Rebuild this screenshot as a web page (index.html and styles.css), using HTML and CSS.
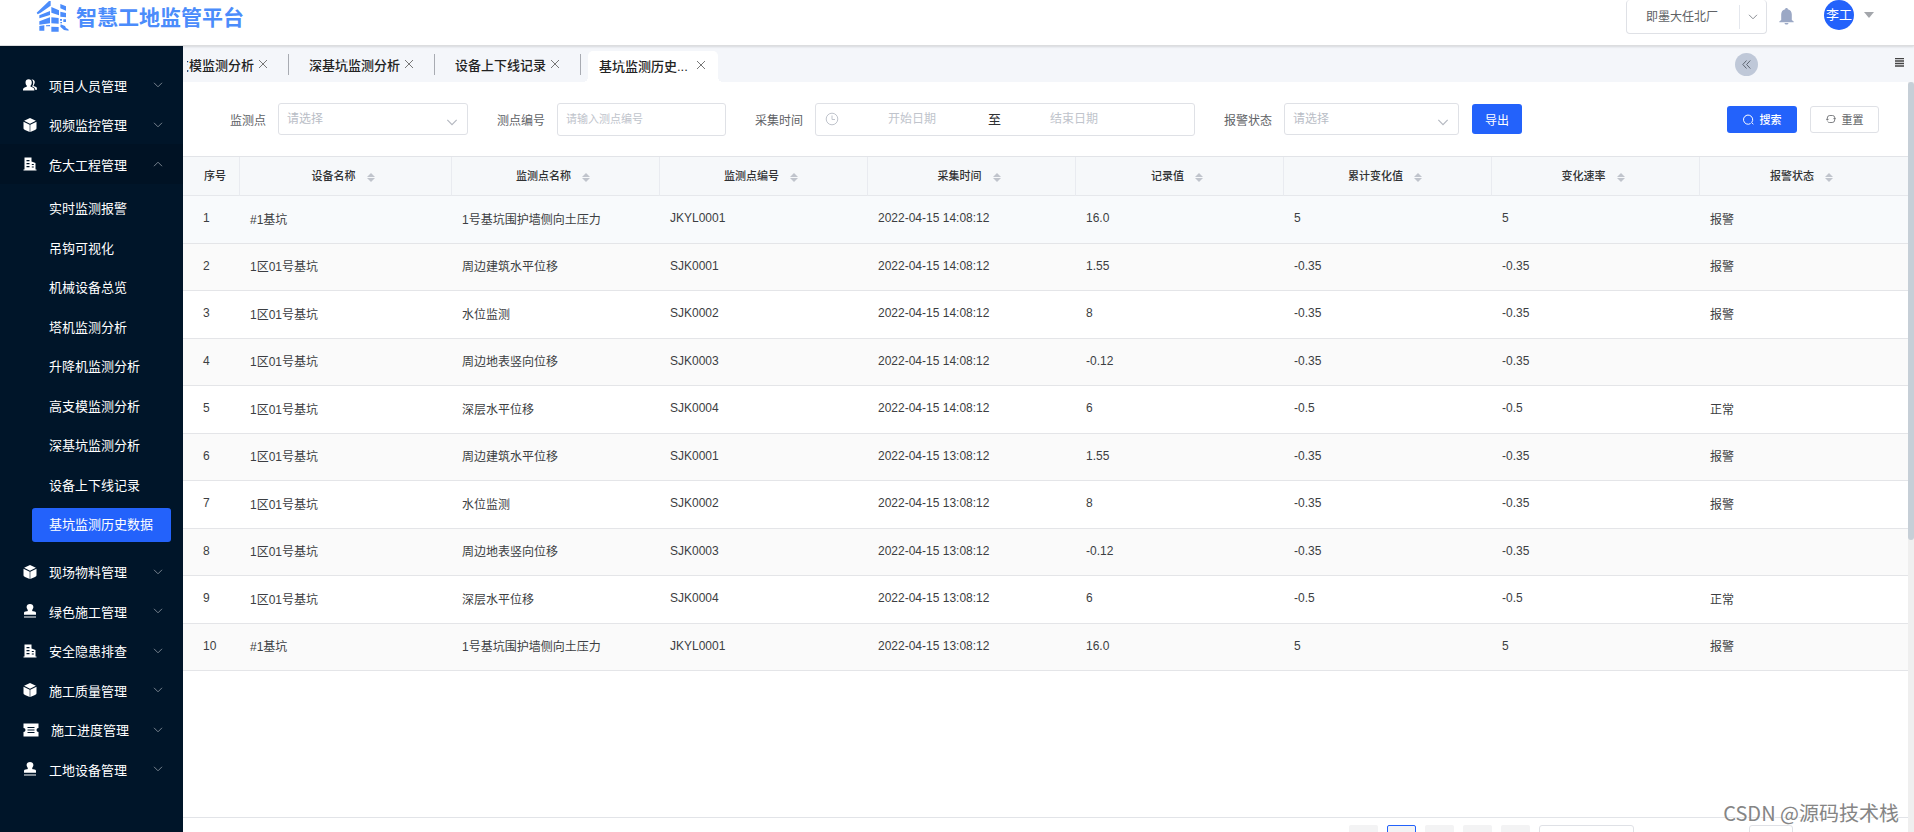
FILE: index.html
```html
<!DOCTYPE html>
<html lang="zh-CN">
<head>
<meta charset="utf-8">
<title>智慧工地监管平台</title>
<link rel="stylesheet" href="styles.css">
</head>
<body>
<svg class="sprite" aria-hidden="true">
  <symbol id="i-down" viewBox="0 0 10 6"><path d="M1 .8 5 4.8 9 .8" fill="none" stroke="currentColor"/></symbol>
  <symbol id="i-up" viewBox="0 0 10 6"><path d="M1 5.2 5 1.2 9 5.2" fill="none" stroke="currentColor"/></symbol>
  <symbol id="i-close" viewBox="0 0 10 10"><path d="M1 1 9 9M9 1 1 9" fill="none" stroke="currentColor"/></symbol>
  <symbol id="i-sort" viewBox="0 0 8 9"><path d="M4 0 8 4H0ZM4 9 8 5H0Z" fill="currentColor"/></symbol>
  <symbol id="i-people" viewBox="0 0 15 14"><path d="M9 1.200C10.500.600 12.600 1.400 12.600 3.800c0 1.500-.6 2.500-1.200 3.200v1l2.600 1.200c.7.400 1 1 1 2.800h-2c-.1-1.600-.5-2.200-1.500-2.700L9.600 8.400c1-1.200 1.300-2.300 1.300-3.900C10.900 3 10.300 1.900 9 1.200Z" fill="currentColor"/><path d="M6 .8c2 0 3.400 1.300 3.400 3.400 0 1.600-.6 2.800-1.400 3.500v1l3 1.300c1 .5 1.200 1.200 1.200 3H0c0-1.800.2-2.500 1.200-3l3-1.300v-1C3.300 7 2.700 5.800 2.700 4.200 2.700 2.100 4.100.8 6 .8Z" fill="currentColor"/></symbol>
  <symbol id="i-box" viewBox="0 0 14 14"><path d="M7 0 12.900 2.800 7 5.800 1.100 2.800ZM.5 3.700 6.700 6.700V14L2 12C1 11.500.5 11 .5 10ZM13.500 3.700 7.300 6.700V14L12 12c1-.5 1.500-1 1.500-2Z" fill="currentColor"/></symbol>
  <symbol id="i-building" viewBox="0 0 14 14"><path fill-rule="evenodd" d="M1.500.5h7V4.500l4 1.500v6.500H13.500v1H.5v-1h1ZM3.500 3v1.200h3V3Zm0 3v1.200h3V6Zm0 3v1.200h3V9ZM8.800 7v1h2V7Zm0 2.500v1h2v-1Z" fill="currentColor"/></symbol>
  <symbol id="i-stamp" viewBox="0 0 14 14"><path d="M7 0c2 0 3.400 1.300 3.400 3 0 1.500-1 2.200-1.200 3.200-.1.800.2 1 1 1.100C12.200 7.500 13 8 13 9v1.800H1V9c0-1 .8-1.500 2.800-1.700.8-.1 1.100-.3 1-1.100C4.600 5.200 3.600 4.500 3.600 3 3.600 1.300 5 0 7 0ZM1 12.500h12v1H1Z" fill="currentColor"/></symbol>
  <symbol id="i-ticket" viewBox="0 0 16 14"><path fill-rule="evenodd" d="M.5.500h15v4.500a2 2 0 0 0 0 4v4.500H.5V9a2 2 0 0 0 0-4ZM4.500 4v1h7V4Zm0 2.500v1h7v-1Zm0 2.500v1h7V9Z" fill="currentColor"/></symbol>
</svg>

<div class="app">
  <header class="header">
    <div class="brand">
      <svg class="brand-logo" viewBox="108 0 102 96" aria-hidden="true"><g fill="#4b8cfb">
        <path d="M110 38 147 3h5v14L122 38l-9 5ZM118 46 150 33v12L118 55ZM118 64 150 52V70L118 74ZM118 78 133 76V92H118ZM154 21 177 31V46L154 38ZM181 12 198 19V32L181 25ZM181 35 198 39V52L181 50ZM154 52 176 54V71L154 70ZM154 80 176 81V95H154ZM138 76 150 75V79H138Z"/>
        <path d="M182 73 195 78 198 84 205 88 206 92 192 90 181 80ZM180 57h6v5h-6ZM190 58h8v8h-8ZM181 66h5v4h-5Z"/></g></svg>
      <h1 class="brand-name">智慧工地监管平台</h1>
    </div>
    <div class="header-tools">
      <div class="company">
        <select class="company-select" aria-label="工厂"><option>即墨大任北厂</option></select>
        <span class="company-arrow"><svg width="10" height="6"><use href="#i-down"/></svg></span>
      </div>
      <button class="bell" type="button" aria-label="通知"><svg width="15" height="17" viewBox="0 0 15 17"><path d="M7.500 0c.8 0 1.300.5 1.300 1.200C11.500 1.800 12.800 3.800 12.800 6.500V12l1.900 1.500v.8H.3v-.8L2.200 12V6.500C2.200 3.800 3.500 1.800 6.200 1.200 6.200.5 6.700 0 7.500 0ZM5.500 15h4c-.2 1-1 1.600-2 1.600s-1.800-.6-2-1.600Z" fill="#9ba8c5"/></svg></button>
      <button class="user" type="button"><span class="avatar">李工</span><svg width="10" height="6" viewBox="0 0 10 6"><path d="M0 0h10L5 6Z" fill="#a3a6ab"/></svg></button>
    </div>
  </header>

  <div class="body">
    <nav class="sidebar">
      <ul class="menu">
        <li><a class="menu-item" href="#"><svg width="14" height="14"><use href="#i-people"/></svg>项目人员管理<svg class="arrow"><use href="#i-down"/></svg></a></li>
        <li><a class="menu-item" href="#"><svg width="14" height="14"><use href="#i-box"/></svg>视频监控管理<svg class="arrow"><use href="#i-down"/></svg></a></li>
        <li><a class="menu-item open" href="#"><svg width="14" height="14"><use href="#i-building"/></svg>危大工程管理<svg class="arrow"><use href="#i-up"/></svg></a>
          <ul class="submenu">
            <li><a class="sub-item" href="#">实时监测报警</a></li>
            <li><a class="sub-item" href="#">吊钩可视化</a></li>
            <li><a class="sub-item" href="#">机械设备总览</a></li>
            <li><a class="sub-item" href="#">塔机监测分析</a></li>
            <li><a class="sub-item" href="#">升降机监测分析</a></li>
            <li><a class="sub-item" href="#">高支模监测分析</a></li>
            <li><a class="sub-item" href="#">深基坑监测分析</a></li>
            <li><a class="sub-item" href="#">设备上下线记录</a></li>
            <li><a class="sub-item current" href="#">基坑监测历史数据</a></li>
          </ul></li>
        <li><a class="menu-item" href="#"><svg width="14" height="14"><use href="#i-box"/></svg>现场物料管理<svg class="arrow"><use href="#i-down"/></svg></a></li>
        <li><a class="menu-item" href="#"><svg width="14" height="14"><use href="#i-stamp"/></svg>绿色施工管理<svg class="arrow"><use href="#i-down"/></svg></a></li>
        <li><a class="menu-item" href="#"><svg width="14" height="14"><use href="#i-building"/></svg>安全隐患排查<svg class="arrow"><use href="#i-down"/></svg></a></li>
        <li><a class="menu-item" href="#"><svg width="14" height="14"><use href="#i-box"/></svg>施工质量管理<svg class="arrow"><use href="#i-down"/></svg></a></li>
        <li><a class="menu-item" href="#"><svg width="16" height="14"><use href="#i-ticket"/></svg>施工进度管理<svg class="arrow"><use href="#i-down"/></svg></a></li>
        <li><a class="menu-item" href="#"><svg width="14" height="14"><use href="#i-stamp"/></svg>工地设备管理<svg class="arrow"><use href="#i-down"/></svg></a></li>
      </ul>
    </nav>

    <main class="main">
      <div class="tabbar">
        <div class="tabs">
          <div class="tab"><a href="#">高支模监测分析</a><button type="button" aria-label="关闭"><svg width="10" height="10"><use href="#i-close"/></svg></button></div>
          <div class="tab"><a href="#">深基坑监测分析</a><button type="button" aria-label="关闭"><svg width="10" height="10"><use href="#i-close"/></svg></button></div>
          <div class="tab"><a href="#">设备上下线记录</a><button type="button" aria-label="关闭"><svg width="10" height="10"><use href="#i-close"/></svg></button></div>
          <div class="tab active"><a href="#">基坑监测历史...</a><button type="button" aria-label="关闭"><svg width="10" height="10"><use href="#i-close"/></svg></button></div>
        </div>
        <button class="collapse" type="button" aria-label="收起"><svg width="9" height="9" viewBox="0 0 9 9"><path d="M4.500.5.800 4.500 4.500 8.500M8.300.5 4.600 4.500 8.300 8.500" fill="none" stroke="#5d6673"/></svg></button>
        <button class="tab-menu" type="button" aria-label="标签菜单"><svg width="9" height="9" viewBox="0 0 9 9"><path d="M0 .5h9M0 3h9M0 5.500h9M0 8h9" stroke="#444" stroke-width="1.300"/></svg></button>
      </div>

      <div class="page">
        <div class="content">
          <form class="filters">
            <div class="field"><label for="point">监测点</label>
              <span class="select point"><select id="point"><option>请选择</option></select><svg width="12" height="7"><use href="#i-down"/></svg></span></div>
            <div class="field"><label for="code">测点编号</label>
              <input class="code" id="code" type="text" placeholder="请输入测点编号"></div>
            <div class="field"><label for="start">采集时间</label>
              <span class="range">
                <svg width="14" height="14" viewBox="0 0 14 14"><g fill="none" stroke="#c0c4cc"><circle cx="7" cy="7" r="5.800"/><path d="M7 3.500V7.500H10"/></g></svg>
                <input id="start" type="text" placeholder="开始日期"><span class="range-to">至</span><input type="text" placeholder="结束日期" aria-label="结束日期">
              </span></div>
            <div class="field"><label for="state">报警状态</label>
              <span class="select state"><select id="state"><option>请选择</option></select><svg width="12" height="7"><use href="#i-down"/></svg></span></div>
            <button class="btn export" type="button">导出</button>
            <div class="actions">
              <button class="btn search" type="submit"><svg width="11" height="11" viewBox="0 0 11 11"><path d="M7.600 9.500A4.600 4.600 0 1 1 8.700 8.500L10.300 10.300" fill="none" stroke="currentColor"/></svg>搜索</button>
              <button class="btn reset" type="reset"><svg width="10" height="10" viewBox="0 0 10 10"><path d="M1.300 6.200V4A2.500 2.500 0 0 1 3.800 1.500H6.500A2.200 2.200 0 0 1 8.700 3.700M.3 4.800 1.300 6.200 2.600 4.900M8.700 3.900V6A2.500 2.500 0 0 1 6.200 8.500H3.500A2.200 2.200 0 0 1 1.600 7.500M7.400 5.100 8.700 3.800 9.700 5.200" fill="none" stroke="currentColor" stroke-width=".8"/></svg>重置</button>
            </div>
          </form>

          <div class="table-area">
            <table class="records">
              <colgroup><col class="c-no"><col class="c-device"><col><col><col><col><col><col><col></colgroup>
              <thead><tr>
                <th>序号</th>
                <th>设备名称<svg class="sort"><use href="#i-sort"/></svg></th>
                <th>监测点名称<svg class="sort"><use href="#i-sort"/></svg></th>
                <th>监测点编号<svg class="sort"><use href="#i-sort"/></svg></th>
                <th>采集时间<svg class="sort"><use href="#i-sort"/></svg></th>
                <th>记录值<svg class="sort"><use href="#i-sort"/></svg></th>
                <th>累计变化值<svg class="sort"><use href="#i-sort"/></svg></th>
                <th>变化速率<svg class="sort"><use href="#i-sort"/></svg></th>
                <th>报警状态<svg class="sort"><use href="#i-sort"/></svg></th>
              </tr></thead>
              <tbody>
                <tr class="hovered"><td>1</td><td>#1基坑</td><td>1号基坑围护墙侧向土压力</td><td>JKYL0001</td><td>2022-04-15 14:08:12</td><td>16.0</td><td>5</td><td>5</td><td>报警</td></tr>
                <tr><td>2</td><td>1区01号基坑</td><td>周边建筑水平位移</td><td>SJK0001</td><td>2022-04-15 14:08:12</td><td>1.55</td><td>-0.35</td><td>-0.35</td><td>报警</td></tr>
                <tr><td>3</td><td>1区01号基坑</td><td>水位监测</td><td>SJK0002</td><td>2022-04-15 14:08:12</td><td>8</td><td>-0.35</td><td>-0.35</td><td>报警</td></tr>
                <tr><td>4</td><td>1区01号基坑</td><td>周边地表竖向位移</td><td>SJK0003</td><td>2022-04-15 14:08:12</td><td>-0.12</td><td>-0.35</td><td>-0.35</td><td></td></tr>
                <tr><td>5</td><td>1区01号基坑</td><td>深层水平位移</td><td>SJK0004</td><td>2022-04-15 14:08:12</td><td>6</td><td>-0.5</td><td>-0.5</td><td>正常</td></tr>
                <tr><td>6</td><td>1区01号基坑</td><td>周边建筑水平位移</td><td>SJK0001</td><td>2022-04-15 13:08:12</td><td>1.55</td><td>-0.35</td><td>-0.35</td><td>报警</td></tr>
                <tr><td>7</td><td>1区01号基坑</td><td>水位监测</td><td>SJK0002</td><td>2022-04-15 13:08:12</td><td>8</td><td>-0.35</td><td>-0.35</td><td>报警</td></tr>
                <tr><td>8</td><td>1区01号基坑</td><td>周边地表竖向位移</td><td>SJK0003</td><td>2022-04-15 13:08:12</td><td>-0.12</td><td>-0.35</td><td>-0.35</td><td></td></tr>
                <tr><td>9</td><td>1区01号基坑</td><td>深层水平位移</td><td>SJK0004</td><td>2022-04-15 13:08:12</td><td>6</td><td>-0.5</td><td>-0.5</td><td>正常</td></tr>
                <tr><td>10</td><td>#1基坑</td><td>1号基坑围护墙侧向土压力</td><td>JKYL0001</td><td>2022-04-15 13:08:12</td><td>16.0</td><td>5</td><td>5</td><td>报警</td></tr>
              </tbody>
            </table>
          </div>

          <div class="pagination">
            <button class="pg" type="button" aria-label="首页"></button>
            <button class="pg on" type="button" aria-label="第一页"></button>
            <button class="pg" type="button" aria-label="第二页"></button>
            <button class="pg" type="button" aria-label="第三页"></button>
            <button class="pg" type="button" aria-label="下一页"></button>
            <select class="pg-size" aria-label="每页条数"></select>
            <input class="pg-jump" type="text" aria-label="跳转页码">
          </div>
        </div>
        <div class="scrollbar"><div class="thumb"></div></div>
      </div>
    </main>
  </div>
  <div class="watermark">CSDN @源码技术栈</div>
</div>
</body>
</html>
```
FILE: styles.css
```css
* { box-sizing: border-box; }
body {
  margin: 0;
  font-family: "Liberation Sans", "Noto Sans CJK SC", sans-serif;
  font-size: 12px;
  color: #303133;
  background: #fff;
}
button, input, select { font: inherit; color: inherit; margin: 0; }
button { padding: 0; border: 0; background: none; cursor: pointer; }
a { color: inherit; text-decoration: none; }
ul { list-style: none; margin: 0; padding: 0; }
svg { display: block; flex: none; }
.sprite { position: absolute; width: 0; height: 0; }

.app { position: relative; display: flex; flex-direction: column; height: 100vh; overflow: hidden; }

/* header */
.header {
  position: relative;
  flex: none;
  height: 46px;
  display: flex;
  justify-content: space-between;
  align-items: flex-start;
  padding: 0 40px 0 36px;
  border-bottom: 1px solid #dcdddf;
  box-shadow: 0 1px 2px rgba(0, 0, 0, .12);
}
.brand { display: flex; align-items: center; gap: 6px; }
.brand-logo { width: 34px; height: 32px; align-self: flex-start; }
.brand-name { margin: 0; font-size: 21px; line-height: 36px; font-weight: 700; color: #4b8cfb; }
.header-tools { display: flex; align-items: flex-start; }
.company { display: flex; align-items: center; width: 141px; height: 34px; border: 1px solid #dfe1e6; border-top: 0; border-radius: 4px; }
.company-select { flex: 1; height: 24px; padding: 0 0 0 19px; border: 0; border-right: 1px solid #e4e7ed; background: none; appearance: none; color: #606266; }
.company-arrow { width: 26px; display: flex; justify-content: center; color: #8a8d93; }
.bell { margin: 8px 0 0 12px; }
.user { display: flex; align-items: center; gap: 10px; margin-left: 30px; }
.avatar { width: 30px; height: 30px; border-radius: 50%; background: #2362fb; color: #fff; font-size: 13px; line-height: 29px; text-align: center; }

.body { flex: 1; display: flex; min-height: 0; }

/* sidebar */
.sidebar { flex: none; width: 183px; padding-top: 19px; background: #001529; color: #fff; font-size: 13px; }
.menu-item { display: flex; align-items: center; gap: 12px; height: 39px; padding: 0 20px 0 23px; }
.menu > li:nth-child(odd) > .menu-item { height: 40px; }
.menu-item.open { background: #001224; }
.arrow { width: 10px; height: 6px; margin-left: auto; color: #76828e; }
.submenu { padding: 5px 12px 7px 32px; }
.submenu li { display: flex; align-items: center; height: 39px; }
.submenu li:nth-child(odd) { height: 40px; }
.sub-item { flex: 1; padding-left: 17px; line-height: 34px; border-radius: 3px; }
.sub-item.current { background: #2362fb; }

/* tabs */
.main { flex: 1; min-width: 0; display: flex; flex-direction: column; }
.tabbar { flex: none; display: flex; align-items: center; height: 36px; padding: 0 10px 0 4px; background: #f4f6fa; }
.tabs { flex: 1; height: 36px; display: flex; align-items: center; overflow: hidden; }
.tab { flex: none; display: flex; align-items: center; gap: 4px; height: 21px; width: 146px; padding-left: 20px; border-right: 1px solid #a8abb2; font-size: 13px; font-weight: 500; color: #222; }
.tab:first-child { margin-left: -44px; }
.tab:nth-child(3) { margin-right: 7px; }
.tab button { color: #777; }
.tab.active { position: relative; align-self: flex-end; width: 130px; height: 31px; padding: 0 0 3px 11px; border: 0; border-radius: 5px 5px 0 0; background: #fff; }
.tab.active a { width: 93px; }
.tab.active::before, .tab.active::after { content: ""; position: absolute; bottom: 0; width: 5px; height: 5px; }
.tab.active::before { left: -5px; background: radial-gradient(circle at 0 0, transparent 5px, #fff 5px); }
.tab.active::after { right: -5px; background: radial-gradient(circle at 100% 0, transparent 5px, #fff 5px); }
.collapse { width: 23px; height: 23px; border-radius: 50%; background: #bfc8d8; display: flex; align-items: center; justify-content: center; }
.tab-menu { margin: 0 0 4px 137px; }

/* page */
.page { flex: 1; min-height: 0; display: flex; }
.content { flex: 1; min-width: 0; display: flex; flex-direction: column; }
.scrollbar { flex: none; width: 6px; background: #efefef; }
.thumb { height: 61%; border-radius: 3px; background: #c6cfd7; }

.filters { flex: none; display: flex; align-items: center; height: 74px; padding: 0 29px 0 47px; color: #606266; }
.field { display: flex; align-items: center; gap: 12px; margin-right: 29px; }
.field:nth-of-type(4) { margin-right: 13px; }
.field label { white-space: nowrap; }
.field input::placeholder { color: #c0c4cc; opacity: 1; }
.select { position: relative; display: block; }
.select select { width: 100%; height: 32px; padding: 0 8px; border: 1px solid #dfe1e6; border-radius: 3px; background: #fff; appearance: none; color: #b9bdc6; }
.select svg { position: absolute; right: 10px; bottom: 9px; color: #b4b8c0; pointer-events: none; }
.point { width: 190px; }
.state { width: 175px; }
.code { width: 169px; height: 33px; padding: 0 8px; border: 1px solid #dfe1e6; border-radius: 3px; font-size: 11px; }
.range { display: flex; align-items: center; width: 380px; height: 33px; padding: 0 9px; border: 1px solid #dfe1e6; border-radius: 3px; }
.range input { width: 146px; height: 29px; padding: 0; border: 0; background: none; text-align: center; outline: 0; }
.range-to { width: 13px; margin: 0 0 2px 3px; font-size: 13px; color: #303133; }
.btn { display: flex; align-items: center; justify-content: center; gap: 6px; border-radius: 3px; }
.export { width: 50px; height: 30px; background: #2362fb; color: #fff; }
.actions { display: flex; gap: 13px; margin-left: auto; font-size: 11px; }
.search { width: 70px; height: 27px; background: #2362fb; color: #fff; font-weight: 500; }
.reset { width: 69px; height: 27px; border: 1px solid #dfe1e6; background: #fff; }

/* table */
.table-area { flex: 1; min-height: 0; overflow: hidden; border-top: 1px solid #e2e4e8; }
.records { width: 100%; table-layout: fixed; border-collapse: separate; border-spacing: 0; }
.c-no { width: 57px; }
.c-device { width: 212px; }
.records th { height: 39px; padding: 0 0 2px; border-right: 1px solid #e9ebf0; border-bottom: 1px solid #e6e8ec; background: #f6f8fa; font-size: 11px; font-weight: 500; text-align: center; }
.records th:first-child { padding-left: 8px; }
.records th:last-child { border-right: 0; }
.sort { display: inline-block; width: 8px; height: 9px; margin: 0 5px 0 11px; vertical-align: middle; color: #c0c4cc; }
.records td { height: 48px; padding: 0 10px 3px; border-bottom: 1px solid #e4e5e8; color: #3c3e42; white-space: nowrap; }
.records td:first-child { padding-left: 20px; }
.records tbody tr:nth-child(even) td { height: 47px; background: #fafafa; }
.records .hovered td { background: #f8fafc; }

/* pagination */
.pagination { flex: none; display: flex; align-items: flex-start; justify-content: flex-end; gap: 9px; height: 15px; padding: 7px 115px 0 0; border-top: 1px solid #e2e4e8; overflow: hidden; }
.pg { flex: none; width: 29px; height: 29px; border-radius: 2px; background: #f3f3f4; }
.pg.on { border: 1px solid #2362fb; }
.pg-size { width: 95px; height: 29px; margin-right: 106px; border: 1px solid #dfe1e6; border-radius: 3px; background: #fff; appearance: none; }
.pg-jump { width: 44px; height: 29px; border: 1px solid #dfe1e6; border-radius: 3px; }

.watermark { position: absolute; right: 15px; bottom: 5px; font-family: "Noto Sans CJK SC", sans-serif; font-size: 20px; line-height: 28px; font-weight: 400; color: #858585; text-shadow: 1px 1px 0 #fff; }
```
